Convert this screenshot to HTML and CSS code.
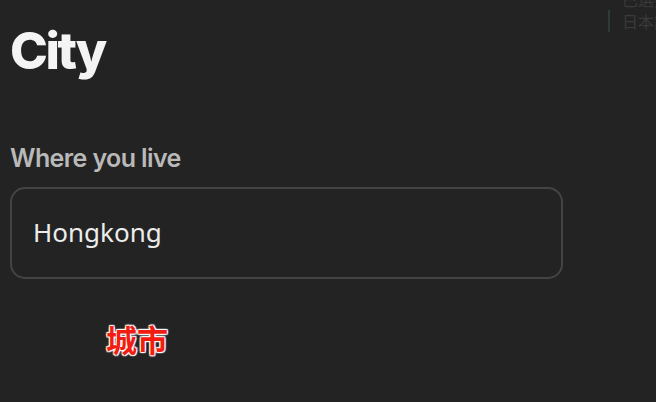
FILE: index.html
```html
<!DOCTYPE html>
<html lang="en">
<head>
<meta charset="utf-8">
<link rel="stylesheet" href="styles.css">
</head>
<body>
<main class="page">
  <h1 class="title">City</h1>
  <label class="label" for="city">Where you live</label>
  <div class="field">
    <span class="value" id="city">Hongkong</span>
  </div>
  <div class="caption">城市</div>
</main>
<div class="ghost">
  <div class="ghost-top">已選擇</div>
  <div class="ghost-row"><span class="ghost-bar"></span><span>日本語</span></div>
</div>
</body>
</html>
```
FILE: styles.css
```css
html, body {
  margin: 0;
  padding: 0;
  width: 656px;
  height: 402px;
  overflow: hidden;
  background: #232323;
}
body {
  position: relative;
  font-family: Inter, "Noto Sans", sans-serif;
}
.page {
  display: flex;
  flex-direction: column;
  align-items: flex-start;
  padding: 21px 0 0 10px;
}
.title {
  margin: 0;
  font-size: 51px;
  line-height: 60px;
  font-weight: 800;
  letter-spacing: -2.4px;
  color: #f4f4f4;
}
.label {
  margin-top: 62px;
  font-size: 25px;
  line-height: 30px;
  font-weight: 600;
  letter-spacing: -0.6px;
  color: #b9b9b9;
}
.field {
  margin-top: 14px;
  box-sizing: border-box;
  width: 553px;
  height: 92px;
  border: 2px solid #444444;
  border-radius: 15px;
  display: flex;
  align-items: center;
  padding-left: 21px;
}
.value {
  font-family: "Noto Sans", sans-serif;
  font-size: 26px;
  color: #ececec;
  margin-top: -2px;
}
.caption {
  margin: 42px 0 0 96px;
  font-family: "Noto Sans CJK SC", sans-serif;
  font-weight: 700;
  font-size: 31px;
  line-height: 36px;
  color: #f21d12;
  text-shadow: 0 0 2px #fff, 1px 1px 1px #fff, -1px -1px 1px #fff, 1px -1px 1px #fff, -1px 1px 1px #fff;
}
.ghost {
  position: absolute;
  left: 608px;
  top: -12px;
  white-space: nowrap;
  font-family: "Noto Sans CJK JP", sans-serif;
  font-size: 16px;
  color: #3a3a3a;
}
.ghost-top {
  padding-left: 14px;
  line-height: 22px;
}
.ghost-row {
  display: flex;
  align-items: center;
  gap: 12px;
  line-height: 22px;
}
.ghost-bar {
  width: 2px;
  height: 22px;
  background: #2f3a3a;
}
```
